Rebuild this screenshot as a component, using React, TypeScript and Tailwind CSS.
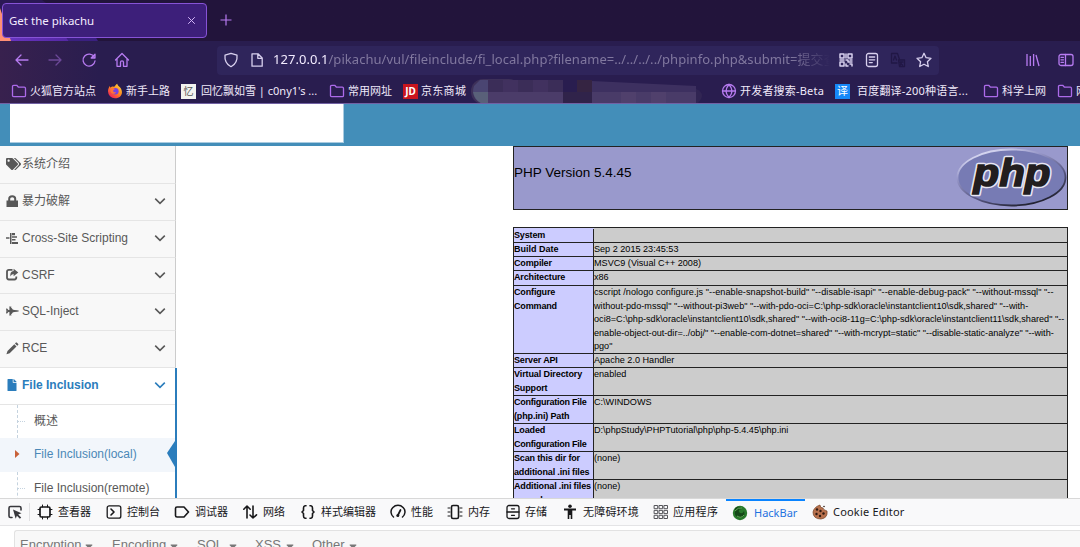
import React from "react";
import { FaTags, FaFighterJet, FaFile, FaCaretDown } from "react-icons/fa";

const cjk = "font-['Noto_Sans','Noto_Sans_CJK_SC',sans-serif]";

type P = { children: React.ReactNode; className?: string };
const Ico = ({ children, className = "" }: P) => (
  <svg viewBox="0 0 16 16" fill="none" stroke="currentColor" strokeWidth="1.3" strokeLinecap="round" strokeLinejoin="round" className={"h-4 w-4 shrink-0 " + className}>{children}</svg>
);
const Cell = ({ children, className = "" }: P) => (
  <div className={"flex shrink-0 items-center whitespace-nowrap " + className}>{children}</div>
);

const Folder = () => (
  <Ico className="mr-[3px] text-[#ac6bea]"><path d="M1.5 12.5v-9q0-1.2 1.2-1.2h3l1.8 1.9h5.8q1.2 0 1.2 1.2v7.1q0 1.2-1.2 1.2H2.7q-1.2 0-1.2-1.2z" /></Ico>
);
const Firefox = () => (
  <svg viewBox="0 0 16 16" className="mr-[3px] h-4 w-4 shrink-0">
    <defs><linearGradient id="ff" x1="1" y1="0" x2="0.2" y2="1"><stop offset="0" stopColor="#ffe348" /><stop offset=".5" stopColor="#ff8a1d" /><stop offset="1" stopColor="#ee1760" /></linearGradient></defs>
    <path d="M8 15.3A7 7 0 0 1 1 8.2c0-2 .8-3.700 1.700-5.200l.8 1.800C5 3.300 6 3.500 7 3.900 8 3 8.600 2 10.200.8c.4 2 2 2.500 3.200 4C16.600 9 14.800 15.300 8 15.300z" fill="url(#ff)" />
    <circle cx="8.300" cy="8.200" r="3.300" fill="#7542e5" /><path d="M3.600 5.300c2-1 3.500 0 4.400.9-1 .2-2 1-1.800 2 .2.900 1.500 1.300 2.800.9C8 12 4.500 11 3.600 8.500z" fill="#ff7139" />
  </svg>
);

const side = [
  { t: "系统介绍", h: "h-[38px]" },
  { t: "暴力破解", h: "h-[37px]" },
  { t: "Cross-Site Scripting", h: "h-[37px]" },
  { t: "CSRF", h: "h-[36px]" },
  { t: "SQL-Inject", h: "h-[37px]" },
  { t: "RCE", h: "h-[37px]" },
];
const sideIcons = [
  <FaTags className="h-[14px] w-[15px]" />,
  <svg viewBox="0 0 13 13" className="h-[13px] w-[13px]" fill="currentColor"><path d="M.5 5.500h11.500v6.500H.5z" /><path d="M3.200 6V3.800Q3.200 1.200 6.200 1.200t3 2.600V6" fill="none" stroke="currentColor" strokeWidth="2" /></svg>,
  <svg viewBox="0 0 13 13" className="h-[13px] w-[13px]" fill="currentColor"><path d="M0 5.300h3.500v1.500H0zM4 1h1.500v11H4zM6 1h3v2.300H6zM6 4.300h5v1.500H6zM6 7h3.500v1.600H6zM6 10h6v2H6z" /></svg>,
  <svg viewBox="0 0 13 13" className="h-[13px] w-[13px]" fill="none" stroke="currentColor" strokeWidth="1.8"><path d="M6.500 1.900H2.900Q1 1.900 1 3.700v5.900Q1 11.500 2.900 11.500h5.600q1.800 0 1.800-1.900V8.600" /><path d="M7.600.8 12.300 4.500 7.600 8.200V6Q5.200 6 4.500 8.500 3.500 3.500 7.600 3z" fill="currentColor" stroke="none" /></svg>,
  <FaFighterJet className="h-[12px] w-[13px]" />,
  <svg viewBox="0 0 13 13" className="h-[13px] w-[13px]" fill="currentColor"><path d="M1.500 9 8.300 2.200l2.200 2.200L3.700 11.200.4 12.300zM9 1.500l.9-.9q.4-.4.900 0L12.200 2q.4.400 0 .9l-1 .9z" /></svg>,
];
const Chevron = () => (
  <svg viewBox="0 0 12 8" className="mr-[9px] ml-auto h-2 w-3" fill="none" stroke="currentColor" strokeWidth="1.600"><path d="M1.200 1.700 6 6.300l4.800-4.600" /></svg>
);

const rows: { h: string; k: string[]; kc?: string[]; v: string[]; vc?: string[] }[] = [
  { h: "h-[15px] pt-px", k: ["System"], v: [""] },
  { h: "h-[14px]", k: ["Build Date"], kc: ["tracking-normal"], v: ["Sep 2 2015 23:45:53"] },
  { h: "h-[14px]", k: ["Compiler"], v: ["MSVC9 (Visual C++ 2008)"] },
  { h: "h-[15px]", k: ["Architecture"], v: ["x86"] },
  { h: "h-[68px]", k: ["Configure", "Command"], v: [
    'cscript /nologo configure.js "--enable-snapshot-build" "--disable-isapi" "--enable-debug-pack" "--without-mssql" "--',
    'without-pdo-mssql" "--without-pi3web" "--with-pdo-oci=C:\\php-sdk\\oracle\\instantclient10\\sdk,shared" "--with-',
    'oci8=C:\\php-sdk\\oracle\\instantclient10\\sdk,shared" "--with-oci8-11g=C:\\php-sdk\\oracle\\instantclient11\\sdk,shared" "--',
    'enable-object-out-dir=../obj/" "--enable-com-dotnet=shared" "--with-mcrypt=static" "--disable-static-analyze" "--with-',
    'pgo"'], vc: ["tracking-[0.055px]", "tracking-[0.02px]", "tracking-[0.02px]", "", ""] },
  { h: "h-[14px]", k: ["Server API"], v: ["Apache 2.0 Handler"] },
  { h: "h-[28px]", k: ["Virtual Directory", "Support"], kc: ["tracking-[-0.1px]", ""], v: ["enabled"] },
  { h: "h-[28px]", k: ["Configuration File", "(php.ini) Path"], kc: ["tracking-[-0.25px]", ""], v: ["C:\\WINDOWS"] },
  { h: "h-[28px]", k: ["Loaded", "Configuration File"], kc: ["", "tracking-[-0.25px]"], v: ["D:\\phpStudy\\PHPTutorial\\php\\php-5.4.45\\php.ini"] },
  { h: "h-[28px]", k: ["Scan this dir for", "additional .ini files"], v: ["(none)"] },
  { h: "h-[28px]", k: ["Additional .ini files", "parsed"], v: ["(none)"] },
];

function Browser() {
  return (
    <div className={"relative h-[104px] shrink-0 overflow-hidden border-b border-[#7161a4] bg-[#291d4f] text-[#e8e0f5] " + cjk}>
      <svg viewBox="0 0 320 104" className="absolute top-0 left-0 h-[104px] w-[320px]">
        <defs><linearGradient id="p" x1="0" x2="1"><stop offset="0" stopColor="#6b36c5" /><stop offset="1" stopColor="#5428a3" /></linearGradient>
          <linearGradient id="n" x1="0" x2="1"><stop offset="0" stopColor="#38214e" /><stop offset="1" stopColor="#291d4f" /></linearGradient></defs>
        <path d="M0 0h320v41H0z" fill="#22143b" /><path d="M0 0h42l55 41H0z" fill="#2b1856" />
        <path d="M0 36h65l4 5H0z" fill="url(#p)" /><path d="M65 36h30l3 5H69z" fill="#3a2080" />
        <path d="M0 8 11 41H0z" fill="#ff8f75" /><path d="M0 41h100v63H0z" fill="url(#n)" />
      </svg>
      <div className="relative flex h-[41px] items-start bg-linear-to-r from-transparent from-[18%] to-[#22143b] to-[28%] pt-[3px] pl-[2px]">
        <div className="flex h-[35px] w-[205px] items-center justify-between rounded-[4px] border border-[#8753d6] bg-[#3d1f7a] pr-[10px] pl-[6px] text-[11.5px] text-[#f3ecff]">
          <span>Get the pikachu</span>
          <svg viewBox="0 0 9 9" className="h-[9px] w-[9px]" stroke="#d2b5f8" strokeWidth="1"><path d="m1.200 1.200 6.600 6.600m0-6.600L1.200 7.800" /></svg>
        </div>
        <svg viewBox="0 0 12 12" className="mt-[11px] ml-[13px] h-3 w-3" stroke="#b77bf1" strokeWidth="1.200"><path d="M6 .5v11M.5 6h11" /></svg>
      </div>
      <div className="relative flex h-[38px] items-center pl-[14px] text-[#b77bf1]">
        <Ico><path d="M2 8H14M7 3 2 8 7 13" /></Ico>
        <Ico className="ml-[17px] opacity-45"><path d="M2 8h12M9 3 14 8 9 13" /></Ico>
        <Ico className="ml-[18px]"><path d="M13.300 5.200A6 6 0 1 0 14 9M14 2.200v3.800h-3.800z" /></Ico>
        <Ico className="ml-[17px]"><path d="M1.500 8 8 1.500 14.500 8M3 7v7.300h3.500v-4q0-1.500 1.500-1.500t1.500 1.500v4H13V7" /></Ico>
        <div className="ml-[87px] flex h-[29px] w-[722px] shrink-0 items-center rounded-[4px] bg-[#2f255b] pl-[6px] text-[#d8d0ee]">
          <Ico><path d="M8 1.300 14 3.200Q14.800 11 8 14.700 1.200 11 2 3.200z" /></Ico>
          <Ico className="ml-[10px]"><path d="M3 1.800h6L13.200 6v8.200H3zM8.800 2v4.300h4.200" /></Ico>
          <div className="ml-[8px] w-[557px] shrink-0 overflow-hidden whitespace-nowrap text-[13px] tracking-[0.045px] text-[#81789f] mask-r-from-[93%] mask-r-to-[100%]">
            <span className="text-[#f3ecff]">127.0.0.1</span>/pikachu/vul/fileinclude/fi_local.php?filename=../../../../phpinfo.php&amp;submit=提交查询
          </div>
          <Ico className="ml-[8px]"><path d="M2 2h4v4H2zM10 2h4v4h-4zM2 10h4v4H2zM8 2v4M2 8h4M8 8h2v2h4M8 12v2h2M12 12h2v2M12 8h2" strokeWidth="1.500" /></Ico>
          <Ico className="ml-[10px]"><rect x="2.500" y="1.500" width="11" height="13" rx="2" /><path d="M5.300 5h5.400M5.300 7.800h5.400M5.300 10.600h3" /></Ico>
          <Ico className="ml-[10px] text-[#211745]"><path d="M7 11H1.500V1.500h6l2 6M3.500 8 5 4l1.500 4M8.500 8h6v6.500h-5zM10 10h3m-1.500 0-1 3m0-2 2 2" /></Ico>
          <Ico className="ml-[10px]"><path d="m8 1.300 2.100 4.400 4.900.6-3.600 3.400.9 4.800L8 12.200l-4.300 2.300.9-4.800L1 6.300l4.900-.6z" /></Ico>
        </div>
        <Ico className="ml-[86px]"><path d="M2 2v12M5.300 4v10M8.600 2v12M11 3l3 11" strokeLinecap="butt" /></Ico>
        <Ico className="ml-[17px]"><rect x="1" y="2.500" width="14" height="11" rx="2" /><path d="M7.500 2.500v11M3 5.300h2.500M3 7.800h2.500M3 10.300h2.500" /></Ico>
      </div>
      <div className="relative flex h-[24px] items-center pl-[11px] text-[11px] text-[#f0e9fa]">
        <Cell className="w-[96px]"><Folder />火狐官方站点</Cell>
        <Cell className="w-[74px]"><Firefox />新手上路</Cell>
        <Cell className="w-[148px]"><span className="mr-[5px] flex h-[15px] w-[15px] items-center justify-center bg-[#f3f3ef] text-[10px] text-[#555]">忆</span>回忆飘如雪 | c0ny1's ...</Cell>
        <Cell className="w-[74px]"><Folder />常用网址</Cell>
        <Cell className="w-[67px]"><span className="mr-[3px] flex h-[15px] w-[15px] items-center justify-center bg-[#c9151e] text-[10px] font-bold text-white">JD</span><span className="tracking-[0.3px]">京东商城</span></Cell>
        <Cell className="w-[251px]">
          <svg viewBox="0 0 240 29" className="h-[29px] w-[240px]">
            <rect x="1" y="2" width="50" height="25" rx="12" fill="#3d3059" /><path d="M10 3h8v24h-5Q0 22 4 9z" fill="#4a4572" /><path d="M3 15h15v12h-5Q5 24 3 15z" fill="#596079" />
            <path d="M18 3h75v12H18z" fill="#3b2d58" /><path d="M18 15h75v11H18z" fill="#4b3c69" /><path d="M33 3h15v12H33zM63 3h15v12H63z" fill="#41315f" /><path d="M93 15h30v12H93z" fill="#30234a" />
            <path d="M107 3h15v12h-15z" fill="#352442" /><path d="m122 4 104 5v20l-75-2-29-1z" fill="#3d3060" /><path d="M122 15h104v13l-104-1z" fill="#493b68" /><path d="M151 15h15v12h-15zM181 15h15v13h-15z" fill="#50406c" /><path d="M226 12q12 5 0 16z" fill="#312553" />
          </svg>
        </Cell>
        <Cell className="w-[113px]"><Ico className="mr-[3px] text-[#b77bf1]"><circle cx="8" cy="8" r="6.500" /><path d="M1.500 8h13M8 1.500q-6 6.500 0 13M8 1.500q6 6.500 0 13" /></Ico><span className="tracking-[0.2px]">开发者搜索-Beta</span></Cell>
        <Cell className="w-[149px]"><span className="mr-[7px] ml-[1px] flex h-[15px] w-[15px] items-center justify-center bg-[#1688f8] text-[11px] text-white">译</span><span className="tracking-[0.2px]">百度翻译-200种语言...</span></Cell>
        <Cell className="w-[74px]"><Folder />科学上网</Cell>
        <Cell><Folder />网站</Cell>
      </div>
    </div>
  );
}

function PhpLogo() {
  return (
    <svg viewBox="0 0 112 60" className="h-[60px] w-[112px]">
      <defs>
        <linearGradient id="rim" x1="0.200" y1="0" x2="0.800" y2="1"><stop offset="0" stopColor="#e6e6fa" /><stop offset=".3" stopColor="#9696c8" /><stop offset=".65" stopColor="#55557f" /><stop offset="1" stopColor="#16161f" /></linearGradient>
      </defs>
      <ellipse cx="56.500" cy="30.500" rx="54" ry="28" fill="#777bb4" stroke="url(#rim)" strokeWidth="1.800" />
      <g className="font-['Liberation_Sans'] text-[38px] font-bold italic" textAnchor="middle">
        <text x="57" y="38.500" textLength="77" lengthAdjust="spacingAndGlyphs" fill="#221e1f" stroke="#e8e6f2" strokeWidth="4.500" strokeLinejoin="round" paintOrder="stroke">php</text>
        <text x="57" y="38.500" textLength="77" lengthAdjust="spacingAndGlyphs" fill="#221e1f" stroke="#221e1f" strokeWidth="1.500" aria-hidden="true">php</text>
      </g>
    </svg>
  );
}

function DevTools() {
  return (
    <div className="flex h-[49px] shrink-0 flex-col overflow-hidden border-t border-[#d8d8d8] bg-white">
      <div className={"flex h-[27px] shrink-0 items-center border-b border-[#e4e4e6] bg-[#f9f9fa] pl-[7px] text-[11px] text-[#18181a] " + cjk}>
        <Cell className="w-[22px] text-[#38383d]"><Ico><path d="M5 13.500H3.500q-1.500 0-1.500-1.500V4q0-1.500 1.500-1.500h9Q14 2.500 14 4v2" strokeWidth="1.600" /><path d="m6 5.500 8.500 3.700-3.300 1.200 3 3-1.300 1.300-3-3-1.200 3z" fill="currentColor" stroke="none" /></Ico></Cell>
        <div className="mr-[7px] h-[18px] w-px bg-[#e0e0e2]" />
        <Cell className="w-[69px]"><Ico className="mr-[5px]"><rect x="3" y="3" width="10" height="10" rx="1.500" strokeWidth="1.700" /><path d="M5.500 1v2m5-2v2m-5 10v2m5-2v2M1 5.500h2m-2 5h2m10-5h2m-2 5h2" strokeWidth="1" /></Ico>查看器</Cell>
        <Cell className="w-[68px]"><Ico className="mr-[5px]"><rect x="1.200" y="1.800" width="13.600" height="12.400" rx="2" /><path d="m5 5 3 3-3 3" strokeWidth="1.600" /></Ico>控制台</Cell>
        <Cell className="w-[68px]"><Ico className="mr-[5px]"><path d="M1.500 4.500q0-1.500 1.500-1.500h7l4.500 5-4.500 5H3q-1.500 0-1.500-1.500z" strokeWidth="1.600" /></Ico>调试器</Cell>
        <Cell className="w-[58px]"><Ico className="mr-[5px]"><path d="M5 14V2M1.800 5.200 5 2l3.200 3.200M11 2v12m-3-3 3 3 3.500-3.200" strokeWidth="1.600" /></Ico>网络</Cell>
        <Cell className="w-[90px]"><Ico className="mr-[5px]"><path d="M6 1.800H5Q3.500 2 3.500 4v2.500L2 8l1.500 1.500V12q0 2 1.500 2.200h1M10 1.800h1q1.500.2 1.500 2.200v2.500L14 8l-1.500 1.500V12q0 2-1.500 2.200h-1" strokeWidth="1.600" /></Ico>样式编辑器</Cell>
        <Cell className="w-[57px]"><Ico className="mr-[5px]"><path d="M3.500 13A7 6.600 0 1 1 12.500 13" strokeWidth="1.500" /><path d="m8 11 2.500-5" strokeWidth="1.700" /><circle cx="7.800" cy="11.500" r="1.500" fill="currentColor" stroke="none" /></Ico>性能</Cell>
        <Cell className="w-[58px]"><Ico className="mr-[5px]"><rect x="4.500" y="1.500" width="7" height="13" rx="1.500" strokeWidth="1.600" /><path d="M1 4h2M1 8h2M1 12h2m10-8h2m-2 4h2m-2 4h2" strokeWidth="1" /></Ico>内存</Cell>
        <Cell className="w-[57px]"><Ico className="mr-[4px]"><rect x="2" y="1.500" width="12" height="13" rx="2" /><path d="M2 8h12M6.500 4.800h3m-3 6.500h3" /></Ico>存储</Cell>
        <Cell className="w-[91px]"><Ico className="mr-[5px]"><g fill="currentColor" stroke="none"><circle cx="8" cy="2.300" r="1.800" /><path d="M2 4.500h12v2h-3.700V15H8.700v-4H7.300v4H5.700V6.500H2z" /></g></Ico><span className="tracking-[0.2px]">无障碍环境</span></Cell>
        <Cell className="w-[73px]"><Ico className="mr-[4px] text-[#55555a]">{[1.5, 6.4, 11.3].map((y) => [1.5, 6.4, 11.3].map((x) => <rect key={x + "-" + y} x={x} y={y} width="3.200" height="3.200" strokeWidth="1" />))}</Ico><span className="tracking-[0.3px]">应用程序</span></Cell>
        <Cell className="h-[27px] w-[79px] border-t-2 border-[#0a84ff] pl-[6px] text-[#1f72e0]">
          <svg viewBox="0 0 16 16" className="mr-[6px] h-4 w-4"><circle cx="8" cy="8" r="7.200" fill="#287a2b" /><path d="M3 3q5-3 7 1-4 0-3 3 3 3 5-1 2 6-4 7-6-1-5-6" fill="#164919" /><path d="M3 6q3-4 7-3M5 11q4 3 7-1" fill="none" stroke="#61ad55" /></svg>HackBar</Cell>
        <Cell className="pl-[7px]"><svg viewBox="0 0 16 16" className="mr-[5px] h-4 w-4"><path d="M8 1q0 3 3 3 0 2 4 3 1 7-6 8-8 0-8-7Q2 3 8 1z" fill="#b8714d" stroke="#754022" strokeWidth=".7" /><g fill="#2f1a12"><circle cx="5" cy="5.500" r="1.200" /><circle cx="8.500" cy="7" r="1.200" /><circle cx="4.500" cy="10" r="1.200" /><circle cx="8" cy="12" r="1.200" /><circle cx="11.500" cy="9.500" r="1.200" /><circle cx="12" cy="2.500" r=".8" /></g></svg><span className="tracking-[0.2px]">Cookie Editor</span></Cell>
      </div>
      <div className="mt-[4px] ml-[14px] flex h-[40px] shrink-0 rounded-tl-[3px] border-t border-l border-[#e2e2e2] bg-[#f8f8f8] pt-[4px] pl-[5px] font-['Liberation_Sans',sans-serif] text-[13px] leading-[20px] text-[#777]">
        {[["Encryption", "w-[92px]", "ml-[4px]"], ["Encoding", "w-[85px]", "ml-[4px]"], ["SQL", "w-[58px]", "ml-[6px]"], ["XSS", "w-[57px]", "ml-[5px]"], ["Other", "w-[60px]", "ml-[4px]"]].map(([t, w, m]) => (
          <div key={t} className={"flex shrink-0 " + w}>{t}<FaCaretDown className={"mt-[5px] h-3 w-2 " + m} /></div>
        ))}
      </div>
    </div>
  );
}

export default function App() {
  return (
    <div className="flex h-[547px] w-[1080px] flex-col overflow-hidden bg-white">
      <Browser />
      <div className="h-[42px] shrink-0 bg-[#438eb9] pl-[10px]"><div className="h-[39px] w-[334px] border-r border-b border-[#a9cbe0] bg-white" /></div>
      <div className="flex h-[352px] shrink-0 overflow-hidden font-['Liberation_Sans','Noto_Sans_CJK_SC',sans-serif]">
        <div className="flex w-[177px] shrink-0 flex-col text-[12px] text-[#585858]">
          {side.map((s, i) => (
            <div key={s.t} className={"mr-px flex shrink-0 items-center border-r border-b border-r-[#ccc] border-b-[#e5e5e5] bg-[#f8f8f8] pb-[2px] pl-[6px] " + s.h}>
              <span className="flex w-[16px] shrink-0 items-center">{sideIcons[i]}</span>{s.t}{i > 0 && <Chevron />}
            </div>
          ))}
          <div className="flex h-[130px] shrink-0 flex-col border-r-2 border-[#2b7dbc]">
            <div className="flex h-[37px] shrink-0 items-center border-b border-[#e5e5e5] pb-[2px] pl-[7px] font-bold text-[#2b7dbc]"><span className="w-[15px]"><FaFile className="h-3 w-[10px]" /></span>File Inclusion<Chevron /></div>
            <div className="flex h-[33px] shrink-0 items-center"><span className="ml-[17px] h-full w-[17px] border-l border-dashed border-[#c5d3df]"><span className="mt-[16px] block w-[7px] border-t border-dotted border-[#c5d3df]" /></span><span className="pb-[2px]">概述</span></div>
            <div className="flex h-[34px] shrink-0 items-center bg-[#f2f6fb] pb-[2px] text-[#4b88b7]"><svg viewBox="0 0 5 8" className="mr-[14px] ml-[15px] h-2 w-[5px]" fill="#c86139"><path d="M0 0v8l4.500-4z" /></svg>File Inclusion(local)<svg viewBox="0 0 8 26" className="ml-auto h-[26px] w-2" fill="#2b7dbc"><path d="M8 0 0 12l8 14z" /></svg></div>
            <div className="flex h-[34px] shrink-0 items-center"><span className="ml-[17px] h-full w-[17px] border-l border-dashed border-[#c5d3df]"><span className="mt-[16px] block w-[7px] border-t border-dotted border-[#c5d3df]" /></span><span className="pb-[2px]">File Inclusion(remote)</span></div>
          </div>
        </div>
        <div className="ml-[336px] w-[555px] text-black">
          <div className="flex h-[64px] justify-between border border-[#222] bg-[#9999cc]">
            <div className="pt-[17px] text-[13.5px] leading-[18px]">PHP Version 5.4.45</div><PhpLogo />
          </div>
          <div className="mt-[17px] border border-[#222] bg-linear-to-r from-[#ccccff] from-[80px] to-[#cccccc] to-[80px] text-[9.1px] leading-[13.5px]">
            {rows.map((r) => (
              <div key={r.k[0]} className={"flex overflow-hidden border-b border-[#222] " + r.h}>
                <div className="w-[80px] shrink-0 border-r border-[#222] bg-[#ccccff] text-[9px] font-bold tracking-[-0.15px] whitespace-nowrap">{r.k.map((l, i) => <div key={l} className={r.kc?.[i]}>{l}</div>)}</div>
                <div className="grow bg-[#cccccc] whitespace-nowrap">{r.v.map((l, i) => <div key={l} className={r.vc?.[i]}>{l}</div>)}</div>
              </div>
            ))}
          </div>
        </div>
      </div>
      <DevTools />
    </div>
  );
}
